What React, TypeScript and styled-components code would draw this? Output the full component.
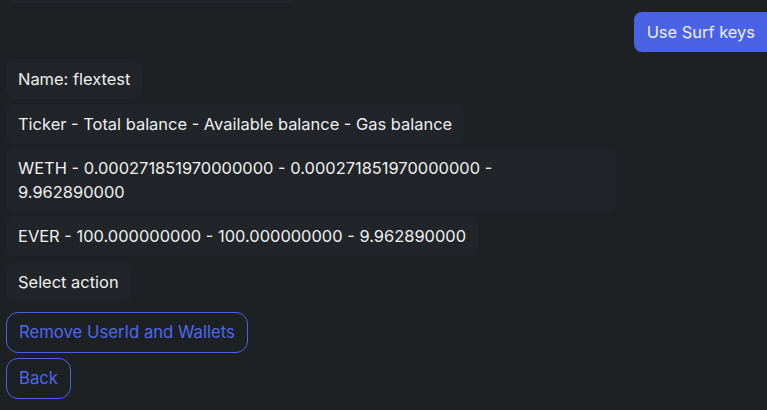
import React from "react";
import styled, { createGlobalStyle } from "styled-components";

const Global = createGlobalStyle`
  html, body { margin: 0; padding: 0; background: #1e2124; }
  body { font-family: Inter, "Noto Sans", sans-serif; }
  #root { height: 410px; overflow: hidden; }
`;

const Chat = styled.div`
  display: flex;
  flex-direction: column;
  align-items: flex-start;
  height: 410px;
  padding: 0 0 0 6px;
  box-sizing: border-box;
  overflow: hidden;
  background: #1e2124;
`;

const Bubble = styled.div<{ $mt?: number; $w?: number }>`
  margin-top: ${(p) => p.$mt ?? 5}px;
  ${(p) => (p.$w ? `width: ${p.$w}px;` : "")}
  background: #212529;
  color: #efefef;
  border-radius: 8px;
  padding: 8px 12px;
  font-size: 16.45px;
  line-height: 24px;
  max-width: 609px;
  box-sizing: border-box;
`;

const Hidden = styled(Bubble)`
  width: 292px;
  height: 40px;
`;

const UserRow = styled.div`
  align-self: stretch;
  display: flex;
  justify-content: flex-end;
  margin-top: 9px;
`;

const UserBubble = styled.div`
  background: #4a63e6;
  color: #eef0ff;
  border-radius: 8px 0 0 8px;
  padding: 8px 12px 8px 13px;
  font-size: 16.45px;
  line-height: 24px;
`;

const Action = styled.button<{ $mt: number }>`
  margin-top: ${(p) => p.$mt}px;
  background: transparent;
  border: 1px solid #4a63e6;
  color: #4d68ea;
  border-radius: 12px;
  padding: 8px 12px;
  font-family: Inter, "Noto Sans", sans-serif;
  font-size: 16.7px;
  line-height: 23px;
  cursor: pointer;
`;

export default function App() {
  return (
    <>
      <Global />
      <Chat>
        <Hidden $mt={-37} />
        <UserRow>
          <UserBubble>Use Surf keys</UserBubble>
        </UserRow>
        <Bubble $mt={7}>Name: flextest</Bubble>
        <Bubble $mt={5}>Ticker - Total balance - Available balance - Gas balance</Bubble>
        <Bubble $mt={4} $w={609}>
          WETH - 0.000271851970000000 - 0.000271851970000000 - 9.962890000
        </Bubble>
        <Bubble $mt={4}>EVER - 100.000000000 - 100.000000000 - 9.962890000</Bubble>
        <Bubble $mt={6}>Select action</Bubble>
        <Action $mt={10}>Remove UserId and Wallets</Action>
        <Action $mt={5}>Back</Action>
      </Chat>
    </>
  );
}
